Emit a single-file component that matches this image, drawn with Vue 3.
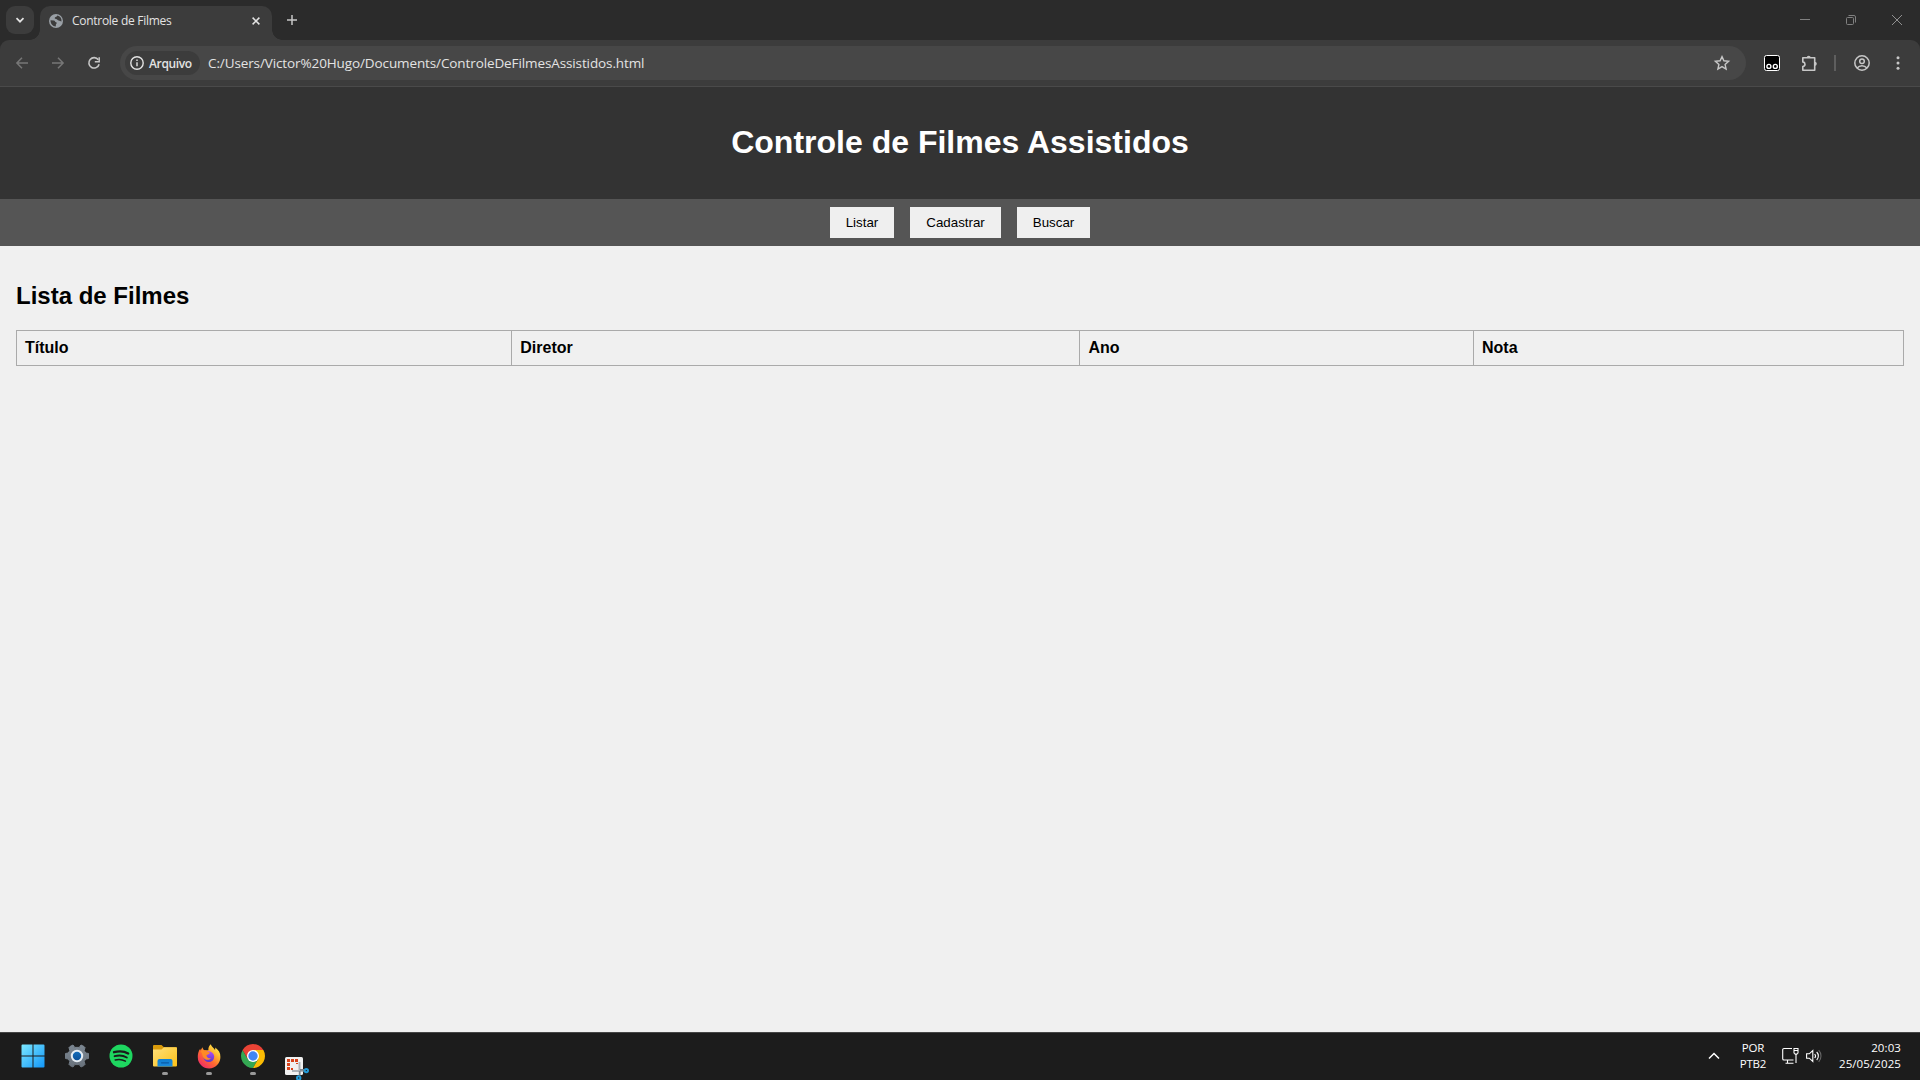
<script setup>
const buttons = ['Listar', 'Cadastrar', 'Buscar']
const columns = ['Título', 'Diretor', 'Ano', 'Nota']
</script>

<template>
  <div class="desktop">
    <div class="tabstrip">
      <div class="tab-search">
        <svg width="10" height="10" viewBox="0 0 10 10"><path d="M1.5 3.2 5 6.7 8.5 3.2" fill="none" stroke="#e3e3e3" stroke-width="1.7" /></svg>
      </div>
      <div class="tab">
        <svg class="globe" width="14" height="14" viewBox="0 0 14 14">
          <circle cx="7" cy="7" r="7" fill="#9aa0a6" />
          <path d="M1.500 6.200 4.800 6.500c1.400.2 1 1.500 2.200 1.700 1 .2.900 1.200.2 1.800-.5.500-.3 1.500-.4 2.500C3.500 12.300 1.500 9.500 1.500 6.200ZM8.300 1.600c-.3 1.400-1.600 1.300-2.300 1.900-.8.700.1 1.300 1 1.600 1.300.3 1.500 1.300 2.700 1.500 1 .2 1.800.6 2.800.9C12.800 4.500 11.200 2.300 8.300 1.600Z" fill="#3c3c3c" />
        </svg>
        <span class="tab-title">Controle de Filmes</span>
        <svg class="tab-close" width="8" height="8" viewBox="0 0 8 8"><path d="M.6.6l6.800 6.800M7.400.6.600 7.400" stroke="#e3e3e3" stroke-width="1.500" /></svg>
      </div>
      <svg class="new-tab" width="10" height="10" viewBox="0 0 10 10"><path d="M5 0v10M0 5h10" stroke="#c7c7c7" stroke-width="1.500" /></svg>
      <div class="window-controls">
        <svg width="10" height="10" viewBox="0 0 10 10"><path d="M0 4.500h10" stroke="#808080" /></svg>
        <svg width="10" height="10" viewBox="0 0 10 10"><g fill="none" stroke="#808080"><rect x=".5" y="2.500" width="7" height="7" rx="1" /><path d="M2.500.500H8A1.500 1.500 0 0 1 9.500 2v5.500" /></g></svg>
        <svg width="10" height="10" viewBox="0 0 10 10"><path d="m0 0 10 10M10 0 0 10" stroke="#909090" /></svg>
      </div>
    </div>

    <div class="toolbar-back">
      <div class="toolbar">
        <svg class="nav-arrow" width="12" height="12" viewBox="0 0 12 12"><path d="M12 6H1.200M6 .800.900 6 6 11.200" fill="none" stroke="#777" stroke-width="1.500" /></svg>
        <svg class="nav-arrow" width="12" height="12" viewBox="0 0 12 12"><path d="M0 6h10.800M6 .800 11.100 6 6 11.200" fill="none" stroke="#777" stroke-width="1.500" /></svg>
        <svg class="reload" width="12" height="12" viewBox="0 0 12 12"><path d="M10.300 2.800A5.200 5.200 0 1 0 11.100 7.200" fill="none" stroke="#c7c7c7" stroke-width="1.600" /><path d="M11.200.200V4.700H6.800" fill="none" stroke="#c7c7c7" stroke-width="1.500" /></svg>
        <div class="omnibox">
          <div class="chip">
            <svg width="14" height="14" viewBox="0 0 14 14"><circle cx="7" cy="7" r="6.200" fill="none" stroke="#e3e3e3" stroke-width="1.400" /><path d="M7 6.300v4M7 3.500v1.500" stroke="#e3e3e3" stroke-width="1.400" /></svg>
            <span>Arquivo</span>
          </div>
          <span class="url">C:/Users/Victor%20Hugo/Documents/ControleDeFilmesAssistidos.html</span>
          <svg class="star" width="16" height="16" viewBox="0 0 16 16"><path d="m8 1.600 1.900 4.200 4.700.5-3.500 3.100 1 4.600L8 11.600 3.900 14l1-4.600L1.400 6.300l4.700-.5Z" fill="none" stroke="#c7c7c7" stroke-width="1.400" /></svg>
        </div>
        <div class="extensions">
          <svg width="16" height="16" viewBox="0 0 16 16"><rect x=".5" y=".5" width="15" height="15" rx="2" fill="#000" stroke="#fff" /><g fill="#000" stroke="#fff" stroke-width="1.400"><circle cx="4.900" cy="11.400" r="2" /><circle cx="11.300" cy="11.400" r="2" /></g></svg>
          <svg class="puzzle" width="17" height="17" viewBox="0 0 17 17"><path d="M1.800 2.700H13.700V15.200H1.800V11.500C3 11.300 4 10.500 4 9.200S3 7.200 1.800 6.900Z" fill="none" stroke="#c7c7c7" stroke-width="1.600" stroke-linejoin="round" /><path d="M5.700 2.700a2 2 0 0 1 4 0ZM13.700 6.700a2.100 2.100 0 0 1 0 4.200Z" fill="#c7c7c7" /></svg>
          <span class="divider"></span>
          <svg class="profile" width="16" height="16" viewBox="0 0 16 16"><g fill="none" stroke="#c7c7c7" stroke-width="1.500"><circle cx="8" cy="8" r="7.200" /><circle cx="8" cy="6.300" r="2.300" /><path d="M3.100 13c2.600-3 7.200-3 9.800 0" /></g></svg>
          <svg class="menu" width="4" height="14" viewBox="0 0 4 14"><g fill="#c7c7c7"><circle cx="2" cy="1.700" r="1.500" /><circle cx="2" cy="7" r="1.500" /><circle cx="2" cy="12.300" r="1.500" /></g></svg>
        </div>
      </div>
    </div>

    <div class="page">
      <header><h1>Controle de Filmes Assistidos</h1></header>
      <nav>
        <button v-for="b in buttons" :key="b">{{ b }}</button>
      </nav>
      <main>
        <h2>Lista de Filmes</h2>
        <table>
          <thead>
            <tr><th v-for="c in columns" :key="c">{{ c }}</th></tr>
          </thead>
        </table>
      </main>
    </div>

    <footer class="taskbar">
      <div class="apps">
        <div class="app">
          <svg width="24" height="24" viewBox="0 0 24 24">
            <defs><linearGradient id="win" x1="0" y1="0" x2="24" y2="24" gradientUnits="userSpaceOnUse"><stop stop-color="#7eeaff" /><stop offset="1" stop-color="#0f94f8" /></linearGradient></defs>
            <path d="M1.500.5H11.500V11.500H.5V1.500a1 1 0 0 1 1-1ZM12.500.5h10a1 1 0 0 1 1 1v10h-11ZM.5 12.500h11v11h-10a1 1 0 0 1-1-1ZM12.500 12.500h11v10a1 1 0 0 1-1 1h-10Z" fill="url(#win)" />
          </svg>
        </div>
        <div class="app">
          <svg width="24" height="24" viewBox="0 0 24 24">
            <defs>
              <linearGradient id="gear" x1="0" y1="0" x2="0" y2="1"><stop stop-color="#7c8792" /><stop offset="1" stop-color="#69727c" /></linearGradient>
              <linearGradient id="hub" x1="0" y1="0" x2="0" y2="1"><stop stop-color="#1670bd" /><stop offset="1" stop-color="#0a4e96" /></linearGradient>
            </defs>
            <path d="M5 2.500 8 1l1.700 2.400h4.600L16 1l3 1.500 1 1-.8 3.200 1.600 2.300 2.700.5v5l-2.700.5-1.600 2.300.8 3.200-1 1L16 23l-1.700-2.400H9.700L8 23l-3-1.500-1-1 .8-3.200L3.200 15l-2.700-.5v-5L3.200 9l1.600-2.300L4 3.500Z" fill="url(#gear)" stroke="url(#gear)" stroke-linejoin="round" />
            <circle cx="12" cy="12" r="5.200" fill="url(#hub)" stroke="#e5edf3" stroke-width="2" />
          </svg>
        </div>
        <div class="app">
          <svg width="24" height="24" viewBox="0 0 24 24"><circle cx="12" cy="12" r="11.500" fill="#1ed760" /><g fill="none" stroke="#1b1b1b" stroke-linecap="round"><path d="M5 8.200c5-1.400 10.500-.9 14.200 1.300" stroke-width="2.300" /><path d="M5.600 12.200c4-1.200 8.800-.7 12.200 1.300" stroke-width="1.900" /><path d="M6.200 15.900c3.500-.9 7.200-.5 10.200 1.200" stroke-width="1.500" /></g></svg>
        </div>
        <div class="app running">
          <svg width="24" height="24" viewBox="0 0 24 24">
            <defs>
              <linearGradient id="fold" x1="0" y1="0" x2="1" y2="1"><stop stop-color="#ffe07c" /><stop offset="1" stop-color="#fbc016" /></linearGradient>
              <linearGradient id="tray" x1="0" y1="0" x2="0" y2="1"><stop stop-color="#0f7fd3" /><stop offset="1" stop-color="#1a8bdc" /></linearGradient>
            </defs>
            <path d="M0 2a1 1 0 0 1 1-1h7.500L11 3.200h12a1 1 0 0 1 1 1V10H0Z" fill="#d99a0b" />
            <path d="M0 5.500h8.500L11 3.200h12a1 1 0 0 1 1 1V21.500a1 1 0 0 1-1 1H1a1 1 0 0 1-1-1Z" fill="url(#fold)" />
            <path d="M4.500 22.500V17a2 2 0 0 1 2-2h11a2 2 0 0 1 2 2v5.500Z" fill="url(#tray)" />
            <path d="M8.500 18.800h7" stroke="#0a5ba6" stroke-width="1.200" stroke-linecap="round" />
          </svg>
        </div>
        <div class="app running">
          <svg width="24" height="24" viewBox="0 0 24 24">
            <defs>
              <linearGradient id="fox" x1="1" y1="0" x2=".2" y2="1"><stop offset=".1" stop-color="#fff44f" /><stop offset=".38" stop-color="#ffb02e" /><stop offset=".62" stop-color="#ff6a30" /><stop offset="1" stop-color="#f0256b" /></linearGradient>
              <linearGradient id="orb" x1="0" y1="0" x2="0" y2="1"><stop stop-color="#b14df5" /><stop offset="1" stop-color="#5a35c8" /></linearGradient>
            </defs>
            <path d="M13.800.3c.7 2.600 3 3.300 4.200 5.700.4-.9.300-1.700.2-2.400C21.500 6 23.600 9 23.400 13A11.300 11.300 0 0 1 .8 13.200C.6 10 1.500 7 3.200 4.700l.4 1.800L5.400 3.200c.4 1.600 1.200 2.700 2.400 3.300 1-.4 2.500-.5 3.600-.2C11.100 4 12 1.600 13.800.3Z" fill="url(#fox)" />
            <circle cx="11.800" cy="12.700" r="5.400" fill="url(#orb)" />
            <path d="M3.600 7.500c2-1.700 5.500-1.600 6.700.2 1.400.1 2.200.5 2.500 1.200-.5 1.200-2 1.400-3.300 2.200-.1 2.700 2.300 3.600 4.500 2.800-1.200 2.300-4.900 2.700-7 .4C5 12.200 6 10 3.600 7.500Z" fill="#ff8a25" />
          </svg>
        </div>
        <div class="app running">
          <svg width="24" height="24" viewBox="0 0 24 24">
            <path d="M1.610 6A12 12 0 0 0 12 24l5.200-9L12 12 6.800 15Z" fill="#34a853" />
            <path d="M22.390 6A12 12 0 0 1 12 24l5.200-9L12 6Z" fill="#fbbc04" />
            <path d="M1.610 6 6.800 15 12 12V6L12 6 22.390 6A12 12 0 0 0 1.610 6Z" fill="#ea4335" />
            <circle cx="12" cy="12" r="6" fill="#fff" /><circle cx="12" cy="12" r="4.700" fill="#4285f4" />
          </svg>
        </div>
        <div class="app snip">
          <svg width="24" height="24" viewBox="0 0 24 24">
            <rect x="0" y="1" width="18" height="18" rx="1.500" fill="#f1f1f1" />
            <path d="M2 3h3v3H2ZM6 3h3v3H6ZM10 3h3v3h-3ZM2 7h3v3H2ZM2 11h3v3H2ZM6 12h2v2H6ZM11 7h2v1h-2Z" fill="#d8441c" />
            <path d="M13.500 6h2v8h3v2H7v-2h6.500Z" fill="#aeb3b8" />
            <path d="M15 13.800h4M14.700 15v4.500" fill="none" stroke="#7d858c" stroke-width="1.800" />
            <g fill="none" stroke="#239bd8" stroke-width="2"><circle cx="21.300" cy="14.600" r="1.700" /><circle cx="13.700" cy="22" r="1.700" /></g>
          </svg>
        </div>
      </div>
      <div class="tray">
        <svg class="chevron" width="12" height="8" viewBox="0 0 12 8"><path d="m1 6.500 5-5 5 5" fill="none" stroke="#fff" stroke-width="1.500" /></svg>
        <div class="language"><span>POR</span><span>PTB2</span></div>
        <svg class="network" width="17" height="17" viewBox="0 0 17 17"><g fill="none" stroke="#fff" stroke-width="1.100"><path d="M10 1.500H2A1.300 1.300 0 0 0 .700 2.800v8.900A1.300 1.300 0 0 0 2 13h9.500M5.500 13v3M3.500 16.300h8M12 3.500V1.500h4v4.300a1.500 1.500 0 0 1-1 1.300h-2a1.500 1.500 0 0 1-1-1.300V3.500h4M14 7v9" /></g></svg>
        <svg class="volume" width="16" height="14" viewBox="0 0 16 14"><g fill="none" stroke-width="1.100"><path d="M.6 4.800h2.700L6.800 1.500v11L3.300 9.200H.600ZM8.700 5a3 3 0 0 1 0 4M10.700 3a5.700 5.700 0 0 1 0 8" stroke="#fff" /><path d="M12.700 1.200a8.500 8.500 0 0 1 0 11.600" stroke="#666" /></g></svg>
        <div class="clock"><span>20:03</span><span>25/05/2025</span></div>
      </div>
    </footer>
  </div>
</template>

<style>
body { margin: 0; overflow: hidden; }
</style>

<style scoped>
.desktop { width: 1920px; height: 1080px; display: flex; flex-direction: column; font-family: "Open Sans", "Noto Sans", sans-serif; color: #e3e3e3; overflow: hidden; }
svg { display: block; flex: none; overflow: visible; }

.tabstrip { height: 40px; flex: none; background: #2b2b2b; display: flex; align-items: flex-start; }
.tab-search { width: 28px; height: 28px; margin: 6px 6px 0; border-radius: 9px; background: #3c3c3c; display: flex; align-items: center; justify-content: center; }
.tab { position: relative; width: 232px; height: 34px; margin-top: 6px; border-radius: 10px 10px 0 0; background: #3c3c3c; display: flex; align-items: center; box-sizing: border-box; padding: 0 12px 5px 9px; }
.tab::before, .tab::after { content: ""; position: absolute; bottom: 0; width: 10px; height: 10px; }
.tab::before { left: -10px; background: radial-gradient(circle at 0 0, transparent 9.500px, #3c3c3c 10px); }
.tab::after { right: -10px; background: radial-gradient(circle at 100% 0, transparent 9.500px, #3c3c3c 10px); }
.tab-title { margin-left: 9px; font-size: 12px; letter-spacing: -0.28px; flex: 1; white-space: nowrap; }
.new-tab { margin: 15px 0 0 15px; }
.window-controls { margin: 15px 18px 0 auto; display: flex; gap: 36px; }

.toolbar-back { height: 47px; flex: none; background: #2b2b2b; }
.toolbar { height: 47px; box-sizing: border-box; border-bottom: 1px solid #4a4a4a; background: #3c3c3c; border-radius: 9px 9px 0 0; display: flex; align-items: center; padding-left: 16px; }
.nav-arrow { margin-right: 24px; }
.omnibox { width: 1626px; height: 34px; margin-left: 20px; box-sizing: border-box; padding: 0 16px 0 5px; border-radius: 17px; background: #474747; display: flex; align-items: center; }
.chip { width: 75px; height: 24px; box-sizing: border-box; padding-left: 5px; border-radius: 12px; background: #3c3c3c; display: flex; align-items: center; gap: 5px; font-size: 12px; font-weight: 600; letter-spacing: -0.35px; }
.url { margin-left: 8px; font-size: 13.500px; letter-spacing: -0.11px; flex: 1; }
.extensions { display: flex; align-items: center; margin-left: 18px; }
.puzzle { margin-left: 21px; }
.divider { width: 2px; height: 16px; margin: 0 18px 0 16px; background: #5e5e5e; }
.menu { margin-left: 26px; }

.page { flex: 1; background: #f0f0f0; color: #000; font-family: "Liberation Sans", Arial, sans-serif; font-size: 16px; }
header { background: #333; color: #fff; padding: 16px; height: 112px; box-sizing: border-box; text-align: center; display: flow-root; }
h1 { font-size: 32px; line-height: 37px; margin: 21.440px 0; }
nav { background: #555; display: flex; justify-content: center; gap: 16px; padding: 8px; }
button { height: 31px; border: 0; background: #efefef; color: #000; padding: 8px 16px; font: 13.333px "Liberation Sans", Arial, sans-serif; }
main { padding: 16px; display: flow-root; }
h2 { font-size: 24px; line-height: 28px; margin: 19.920px 0; }
table { width: 100%; border-collapse: collapse; }
th { border: 1px solid #aaa; padding: 8px; text-align: left; line-height: 18px; }

.taskbar { height: 48px; flex: none; box-sizing: border-box; border-top: 1px solid #454545; background: #1c1c1c; display: flex; justify-content: space-between; color: #fff; }
.apps { display: flex; padding-left: 11px; }
.app { position: relative; width: 44px; height: 47px; box-sizing: border-box; padding-bottom: 1px; display: flex; align-items: center; justify-content: center; }
.running::after { content: ""; position: absolute; left: 19px; bottom: 5px; width: 6px; height: 3px; border-radius: 2px; background: #999; }
.snip { align-items: flex-end; padding-bottom: 0; }
.tray { display: flex; align-items: center; padding: 0 19px 2px 0; font-size: 11.500px; line-height: 16px; }
.language, .clock { display: flex; flex-direction: column; }
.language { align-items: center; width: 30px; margin: 0 14px 0 18px; letter-spacing: -0.2px; }
.volume { margin-left: 7px; }
.clock { align-items: flex-end; width: 65px; margin-left: 14px; letter-spacing: 0.1px; }
</style>
